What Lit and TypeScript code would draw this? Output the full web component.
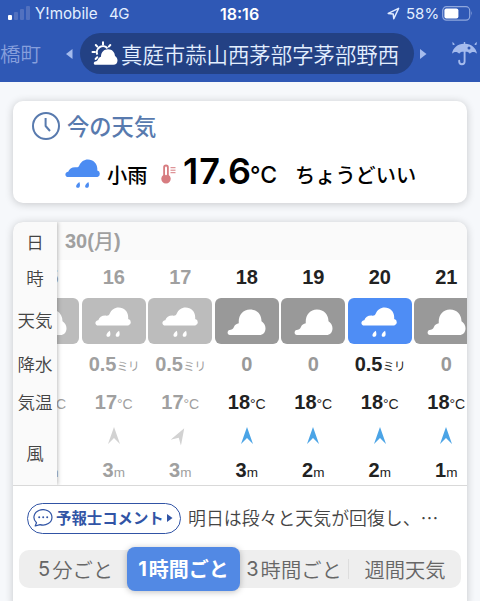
import {LitElement, css, html, svg} from 'lit'
import {customElement, property} from 'lit/decorators.js'
import {classMap} from 'lit/directives/class-map.js'

type Hour =
{
    hour: string
    sky: 'rain' | 'cloud'
    rain: string
    temp: string
    wind: string
    angle: number
    past?: boolean
    wet?: boolean
}

const HOURS: Hour[] = [
    {hour: '15', sky: 'cloud', rain: '', temp: '17', wind: '3', angle: 0, past: true},
    {hour: '16', sky: 'rain', rain: '0.5', temp: '17', wind: '3', angle: 0, past: true},
    {hour: '17', sky: 'rain', rain: '0.5', temp: '17', wind: '3', angle: 30, past: true},
    {hour: '18', sky: 'cloud', rain: '0', temp: '18', wind: '3', angle: 0},
    {hour: '19', sky: 'cloud', rain: '0', temp: '18', wind: '2', angle: 0},
    {hour: '20', sky: 'rain', rain: '0.5', temp: '18', wind: '2', angle: 0, wet: true},
    {hour: '21', sky: 'cloud', rain: '0', temp: '18', wind: '1', angle: 0},
]

const rainIcon = svg`
    <path d="M3.2 18 C1.3 18 .4 16.7 .4 15.4 C.4 14 1.4 13.1 3.2 12.8 C4.2 10 7 7.9 11 8.3 C12.8 8.4 13.6 8 14.4 6.2 C15.9 2.7 19 .4 22.9 .4 C28.3 .4 32.2 4.4 32.3 9.6 V11.6 A3.3 3.3 0 0 1 32.4 18 Z"/>
    <path d="M14.4 22.9 C15.4 26 15.2 28.8 12.8 28.8 C10.2 28.8 10.6 25.2 14.4 22.9 Z"/>
    <path d="M23.4 22.9 C24.4 26 24.2 28.8 21.8 28.8 C19.2 28.8 19.6 25.2 23.4 22.9 Z"/>`

const cloudIcon = svg`
    <path d="M2.5 27 C-.6 27 -.6 22.6 2 22 C4 21.6 5.5 21 6.3 19.2 C7.3 16.6 9.2 15.6 11.3 15.2 C10.6 7.4 15.4 1.5 22.4 1.5 C29.8 1.5 34 6.8 34 13.2 C36 14.6 38 16.8 38 20.2 C38 24.4 35.6 27 31.8 27 Z"/>`

@customElement('weather-header')
export class Weather_Header extends LitElement
{
    render()
    {
        return html`
            <div class="status">
                <svg class="signal" width="23" height="14">
                    <rect x="0" y="9" width="4" height="5" rx="1" fill="#fff"/>
                    <rect x="6" y="6" width="4" height="8" rx="1" fill="#5271bf"/>
                    <rect x="12" y="3" width="4" height="11" rx="1" fill="#5271bf"/>
                    <rect x="18" y="0" width="4" height="14" rx="1" fill="#5271bf"/>
                </svg>
                <span class="carrier">Y!mobile</span>
                <span class="network">4G</span>
                <span class="clock">18:16</span>
                <svg class="locate" width="13" height="13">
                    <path d="M1.2 6.4 L11.6 1.4 L6.8 11.8 L6.2 6.9 Z" fill="none" stroke="#dfeaff" stroke-width="1.5" stroke-linejoin="round"/>
                </svg>
                <span class="percent">58%</span>
                <svg width="31" height="15">
                    <rect x=".7" y=".7" width="27" height="13.4" rx="3.8" fill="none" stroke="#8fa7dd" stroke-width="1.2"/>
                    <rect x="2.4" y="2.4" width="14" height="10" rx="2" fill="#fff"/>
                    <path d="M29.3 5 Q31 7.4 29.3 9.8 Z" fill="#8fa7dd"/>
                </svg>
            </div>
            <div class="places">
                <span class="previous">橋町</span>
                <svg class="left" width="7" height="10"><path d="M0 5 L6.5 0 V10 Z" fill="#a5bbed"/></svg>
                <div class="current">
                    <svg width="27" height="25" viewBox="0 0 27 25">
                        <g stroke="#fff" stroke-width="2" stroke-linecap="round">
                            <path d="M12 1.2 V3.6 M4.8 4 L6.3 5.6 M1.5 11 H4 M19.3 4 L17.8 5.6 M4.6 18 L6.3 16.3"/>
                        </g>
                        <path d="M6.3 13.7 A6.1 6.1 0 0 1 16.5 7.3" fill="none" stroke="#fff" stroke-width="2"/>
                        <path d="M4.5 23.8 C2.2 23.8 2.4 20.8 4.2 20.5 C6 20.2 6.5 19.5 7 18.3 C7.7 16.5 8.8 16 10 15.8 C10 11 13.2 8.3 17 8.3 C21.2 8.3 23.7 11.2 24 15.1 C25.4 16 26.5 17.5 26.5 19.5 C26.5 22.2 24.8 23.8 22.4 23.8 Z" fill="#fff"/>
                    </svg>
                    <span>真庭市蒜山西茅部字茅部野西</span>
                </div>
                <svg class="right" width="7" height="10"><path d="M6.5 5 L0 0 V10 Z" fill="#a5bbed"/></svg>
                <svg class="umbrella" width="28" height="25" viewBox="0 0 28 25" fill="#a5bbed">
                    <path d="M1 12.7 C2 6.5 7 2.8 12.8 2.7 V1 H14.2 V2.7 C20 2.8 25 6.5 26 12.7 C24 10.5 20.5 10.5 18.8 12.8 C17.5 10.8 15.5 10.4 13.5 11 C11.5 10.4 9.5 10.8 8.2 12.8 C6.5 10.5 3 10.5 1 12.7 Z"/>
                    <path d="M13.6 10 V20.5 A2.7 2.7 0 0 1 8.2 20.5 V19.6" fill="none" stroke="#a5bbed" stroke-width="1.9" stroke-linecap="round"/>
                    <path d="M1.5 .7 L3.8 3.2 A1.4 1.4 0 0 1 1.5 3.6 Z M25.7 .7 L23.4 3.2 A1.4 1.4 0 0 0 25.7 3.6 Z"/>
                    <circle cx="18" cy="7" r="1.5" fill="#2f58b5"/>
                </svg>
            </div>
        `
    }

    static styles = css`
        :host
        {
            display: block;
            height: 82px;
            background: #2f58b5;
            color: #e3efff;
            overflow: hidden;
        }

        svg
        {
            display: block;
            flex: none;
        }

        .status
        {
            display: flex;
            align-items: center;
            height: 27px;
            padding-left: 8px;
            box-sizing: border-box;
            font: 15px/1 Inter, "Liberation Sans", sans-serif;
            white-space: nowrap;
        }

        .signal
        {
            margin-right: 4px;
            margin-top: -2px;
        }

        .carrier
        {
            width: 74px;
            font-size: 15.2px;
        }

        .network
        {
            width: 111px;
            letter-spacing: -.4px;
        }

        .clock
        {
            width: 167px;
            font-size: 16px;
            font-weight: 600;
            color: #fff;
        }

        .percent
        {
            width: 36px;
            margin-left: 6px;
        }

        .places
        {
            display: flex;
            align-items: center;
            height: 53px;
            font: 350 20.5px/1 "Noto Sans CJK JP", sans-serif;
            white-space: nowrap;
        }

        .previous
        {
            width: 41px;
            color: #869fdc;
            flex: none;
        }

        .left
        {
            margin: 0 7px 0 25px;
        }

        .current
        {
            display: flex;
            align-items: center;
            box-sizing: border-box;
            width: 334px;
            height: 41px;
            padding-left: 11px;
            gap: 3px;
            border-radius: 21px;
            background: #234184;
            font-size: 21.4px;
            flex: none;
        }

        .right
        {
            margin: 0 24px 0 6px;
        }
    `
}

@customElement('weather-now')
export class Weather_Now extends LitElement
{
    render()
    {
        return html`
            <div class="title">
                <svg width="28" height="28" fill="none" stroke="#587aae" stroke-width="2">
                    <circle cx="14" cy="14" r="13"/>
                    <path d="M13.6 6 V14 L18 19" stroke-linejoin="round"/>
                </svg>
                <span>今の天気</span>
            </div>
            <div class="reading">
                <svg width="36" height="29" viewBox="0 0 36 29" fill="#4c8cf2">${rainIcon}</svg>
                <span class="sky">小雨</span>
                <svg width="15" height="20" viewBox="0 0 15 20" fill="#d77c80">
                    <path d="M2.2 3.2 A2.8 2.8 0 0 1 7.8 3.2 V11 A4.7 4.7 0 1 1 2.2 11 Z"/>
                    <rect x="4" y="2.6" width="2" height="8.6" rx="1" fill="#fff"/>
                    <path d="M9.5 3.7 H14.5 M9.5 6.2 H14.5 M9.5 8.7 H14.5" stroke="#d77c80" stroke-width="1"/>
                </svg>
                <span class="temp">17.6</span>
                <span class="unit">°C</span>
                <span class="feel">ちょうどいい</span>
            </div>
        `
    }

    static styles = css`
        :host
        {
            display: block;
            height: 102px;
            box-sizing: border-box;
            padding: 11px 19px 0;
            border-radius: 10px;
            background: #fff;
            box-shadow: 0 1px 8px rgba(0, 0, 0, .2);
            font: 500 20.2px/1 "Noto Sans CJK JP", sans-serif;
            color: #000;
        }

        svg
        {
            display: block;
            flex: none;
        }

        .title
        {
            display: flex;
            align-items: center;
            gap: 7px;
            font-size: 22.3px;
            color: #587aae;
        }

        .title span
        {
            margin-top: -2px;
        }

        .reading
        {
            display: flex;
            align-items: center;
            height: 40px;
            margin-top: 13px;
            padding-left: 33px;
            white-space: nowrap;
            padding-bottom: 6px;
            box-sizing: border-box;
        }

        .reading > svg:first-child
        {
            margin-top: 7px;
        }

        .sky
        {
            width: 54px;
            margin: 11px 0 0 6px;
        }

        .reading > svg:nth-of-type(2)
        {
            margin-top: 8px;
        }

        .temp
        {
            width: 66px;
            margin: 2px 0 0 7px;
            font: 600 36px/1 Inter, "Liberation Sans", sans-serif;
            letter-spacing: 1px;
        }

        .unit
        {
            width: 45px;
            margin: 10px 0 0 1px;
            font: 500 23px/1 Inter, "Liberation Sans", sans-serif;
        }

        .feel
        {
            margin-top: 11px;
        }
    `
}

@customElement('weather-hour')
export class Weather_Hour extends LitElement
{
    @property({attribute: false})
    data!: Hour

    render()
    {
        const h = this.data
        const box = {box: true, wet: !!h.wet, gone: !!h.past}
        return html`
            <div class=${classMap({column: true, past: !!h.past})}>
                <div class="hour">${h.hour}</div>
                <div class=${classMap(box)}>
                    ${h.sky === 'rain'
                        ? html`<svg width="37" height="30" viewBox="0 0 36 29">${rainIcon}</svg>`
                        : html`<svg width="39" height="28" viewBox="0 0 38 28">${cloudIcon}</svg>`}
                </div>
                <div class="rain">
                    ${h.rain === '0' ? html`<b class="zero">0</b>` : h.rain ? html`<b>${h.rain}</b><small class="mm">ミリ</small>` : ''}
                </div>
                <div class="temp"><b>${h.temp}</b><small>°C</small></div>
                <div class="arrow">
                    <svg width="12" height="17" viewBox="0 0 12 17" style="transform: rotate(${h.angle}deg)">
                        <path d="M6 0 L12 17 L6 11 L0 17 Z"/>
                    </svg>
                </div>
                <div class="wind"><b>${h.wind}</b><small class="m">m</small></div>
            </div>
        `
    }

    static styles = css`
        :host
        {
            display: block;
            width: 66.5px;
            flex: none;
        }

        .column
        {
            font: 20px/1 "Liberation Sans", sans-serif;
            color: #222;
        }

        .past
        {
            color: #a0a0a0;
        }

        .column > div
        {
            display: flex;
            align-items: center;
            justify-content: center;
            white-space: nowrap;
        }

        .column > .rain,
        .column > .temp,
        .column > .wind
        {
            align-items: baseline;
        }

        .column > .hour
        {
            height: 38px;
            padding-bottom: 4px;
            box-sizing: border-box;
            font-weight: bold;
        }

        .column > .box
        {
            width: 64px;
            height: 46px;
            margin: 0 auto;
            border-radius: 6px;
            background: #999;
            padding-top: 2px;
            box-sizing: border-box;
        }

        .column > .gone
        {
            background: #bcbcbc;
        }

        .column > .wet
        {
            background: #4e8df5;
        }

        .box svg
        {
            fill: #fff;
        }

        .column > .rain
        {
            height: 38px;
            padding-top: 10px;
            box-sizing: border-box;
        }

        .zero
        {
            color: #999;
        }

        .column > .temp
        {
            height: 36px;
            padding-top: 10px;
            box-sizing: border-box;
        }

        .column > .arrow
        {
            height: 34px;
        }

        .arrow svg
        {
            fill: #4ba4e6;
        }

        .past .arrow svg
        {
            fill: #d2d2d2;
        }

        .column > .wind
        {
            height: 33px;
            padding-top: 8px;
            box-sizing: border-box;
        }

        small
        {
            font-size: 14px;
        }

        .m
        {
            font-size: 13.5px;
        }

        .mm
        {
            font: 400 12px/1 "Noto Sans CJK JP", sans-serif;
            letter-spacing: -.8px;
        }
    `
}

@customElement('weather-forecast')
export class Weather_Forecast extends LitElement
{
    render()
    {
        return html`
            <div class="table">
                <div class="labels">
                    <div class="day">日</div>
                    <div class="time">時</div>
                    <div class="sky">天気</div>
                    <div class="rain">降水</div>
                    <div class="temp">気温</div>
                    <div class="wind">風</div>
                </div>
                <div class="scroll">
                    <div class="date">30(<span>月</span>)</div>
                    <div class="hours">
                        ${HOURS.map(h => html`<weather-hour .data=${h}></weather-hour>`)}
                    </div>
                </div>
            </div>
            <div class="comment">
                <div class="button">
                    <svg width="20" height="18" viewBox="0 0 20 18">
                        <path d="M3.5 13.7 A9 7.7 0 1 1 7 15.6 L2.2 17 Z" fill="none" stroke="#3154a5" stroke-width="1.2" stroke-linejoin="round"/>
                        <circle cx="6.2" cy="8.2" r="1" fill="#3154a5"/>
                        <circle cx="10.2" cy="8.2" r="1" fill="#3154a5"/>
                        <circle cx="14.2" cy="8.2" r="1" fill="#3154a5"/>
                    </svg>
                    <span>予報士コメント</span>
                    <svg width="6" height="8"><path d="M0 0 L5.5 4 L0 8 Z" fill="#3154a5"/></svg>
                </div>
                <span class="message">明日は段々と天気が回復し、…</span>
            </div>
            <div class="tabs">
                <span class="five"><i>5</i>分ごと</span>
                <span class="active"><i>1</i>時間ごと</span>
                <span class="three"><i>3</i>時間ごと</span>
                <span class="week">週間天気</span>
            </div>
        `
    }

    static styles = css`
        :host
        {
            display: block;
            height: 390px;
            border-radius: 10px;
            background: #fff;
            box-shadow: 0 1px 8px rgba(0, 0, 0, .2);
            font: 350 17.5px/1 "Noto Sans CJK JP", sans-serif;
            color: #444;
        }

        .table
        {
            display: flex;
            height: 263px;
            overflow: hidden;
            border-bottom: 1px solid #d9d9d9;
            border-radius: 10px 10px 0 0;
        }

        .labels
        {
            width: 44px;
            flex: none;
            z-index: 1;
            background: #fafafa;
            box-shadow: 1px 0 4px rgba(0, 0, 0, .25);
        }

        .labels > div
        {
            display: flex;
            align-items: center;
            justify-content: center;
        }

        .day
        {
            height: 39px;
        }

        .time
        {
            height: 34px;
        }

        .sky
        {
            height: 50px;
        }

        .rain
        {
            height: 38px;
        }

        .temp
        {
            height: 38px;
        }

        .wind
        {
            height: 64px;
        }

        .scroll
        {
            flex: 1;
            min-width: 0;
            overflow: hidden;
        }

        .date
        {
            display: flex;
            align-items: center;
            height: 38px;
            padding: 0 0 1px 8px;
            box-sizing: border-box;
            background: #fafafa;
            color: #a0a0a0;
            font: bold 20px/1 "Liberation Sans", sans-serif;
        }

        .date span
        {
            font: 500 20px/1 "Noto Sans CJK JP", sans-serif;
        }

        .hours
        {
            display: flex;
            margin-left: -43px;
        }

        .comment
        {
            display: flex;
            align-items: center;
            height: 64px;
            padding-left: 14px;
            gap: 7px;
            white-space: nowrap;
        }

        .button
        {
            display: flex;
            align-items: center;
            gap: 3px;
            width: 154px;
            height: 31px;
            padding-left: 5px;
            box-sizing: border-box;
            border: 1.5px solid #3154a5;
            border-radius: 16px;
            font-size: 15.4px;
            font-weight: 700;
            color: #3154a5;
        }

        .message
        {
            font-size: 17.9px;
        }

        .tabs
        {
            display: flex;
            align-items: center;
            height: 38px;
            margin: 0 6px;
            border-radius: 10px;
            background: #eee;
            font-size: 20.3px;
            color: #666;
            white-space: nowrap;
        }

        .tabs > span
        {
            display: flex;
            align-items: center;
            justify-content: center;
            box-sizing: border-box;
        }

        .tabs i
        {
            margin-right: 2px;
            font: 400 20px/1 Inter, "Liberation Sans", sans-serif;
        }

        .five
        {
            width: 108px;
            padding-left: 5px;
        }

        .tabs > .active
        {
            width: 113px;
            height: 44px;
            border-radius: 8px;
            background: #5289e4;
            box-shadow: 0 1px 6px rgba(0, 0, 0, .25);
            color: #fff;
            font-weight: 700;
            font-size: 20px;
        }

        .active i
        {
            font-weight: 700;
        }

        .three
        {
            width: 109px;
            border-right: 1px solid #ddd;
        }

        .week
        {
            width: 112px;
        }
    `
}

@customElement('app-root')
export class App_Root extends LitElement
{
    render()
    {
        return html`
            <weather-header></weather-header>
            <main>
                <weather-now></weather-now>
                <weather-forecast></weather-forecast>
            </main>
        `
    }

    static styles = css`
        :host
        {
            display: block;
            height: 601px;
            overflow: hidden;
            background: #f6f8fb;
        }

        main
        {
            display: flex;
            flex-direction: column;
            gap: 19px;
            padding: 19px 13px 0;
        }
    `
}
